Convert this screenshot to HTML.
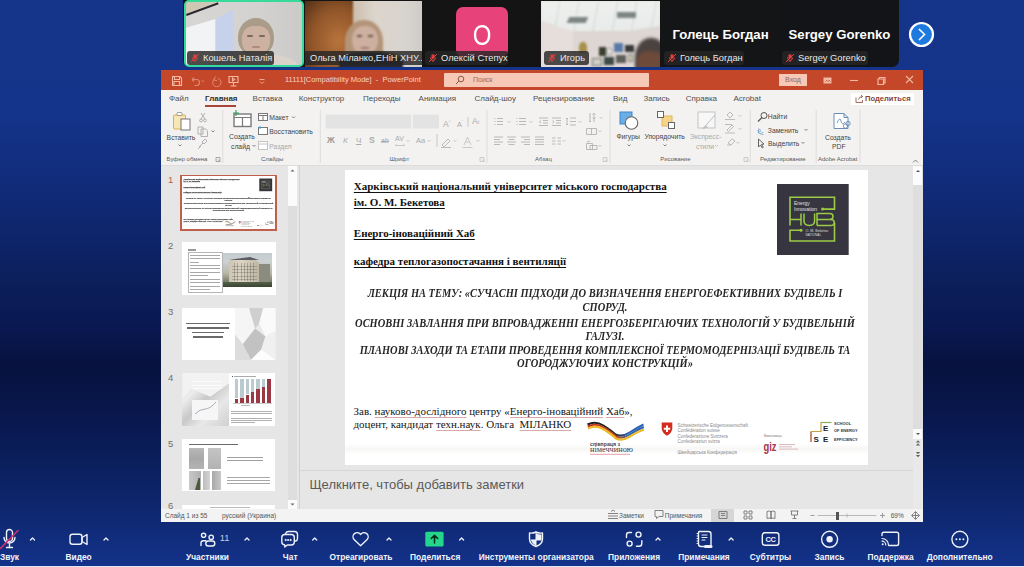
<!DOCTYPE html>
<html><head><meta charset="utf-8">
<style>
*{box-sizing:border-box;margin:0;padding:0}
html,body{width:1024px;height:567px;overflow:hidden}
body{position:relative;font-family:"Liberation Sans",sans-serif;
background:linear-gradient(180deg,#15358a 0%,#14338a 20%,#102a76 35%,#0c1f5c 49%,#091850 58%,#07123f 64%,#08164a 72%,#0c2264 85%,#0f2974 92%,#13328a 100%);}
.a{position:absolute}
.nw{white-space:nowrap}
/* video strip */
#strip{left:183px;top:0;width:716px;height:67px;background:#141414;border-radius:0 0 7px 7px}
.tile{position:absolute;top:1px;height:66px}
.tag{position:absolute;height:14px;top:51px;background:rgba(38,38,38,.82);border-radius:3px;color:#e8e8e8;font-size:9px;line-height:14px;padding-left:16px;padding-right:4px;white-space:nowrap}
.tag:before{content:"";position:absolute;left:4px;top:3px;width:8px;height:8px;}
/* ppt */
#ppt{left:161px;top:70px;width:762px;height:452px;background:#f3f2f1;overflow:hidden}
#title{left:0;top:0;width:762px;height:20px;background:#c5472a}
#tabs{left:0;top:20px;width:762px;height:17px;font-size:8px;color:#505050}
#ribbon{left:0;top:37px;width:762px;height:58px}
#body{left:0;top:95px;width:762px;height:344px;background:#e6e6e6}
#status{left:0;top:439px;width:762px;height:13px;background:#f3f3f3;font-size:7px;color:#555}
/* toolbar */
.tb{position:absolute;top:551px;color:#fff;font-size:9px;font-weight:bold;white-space:nowrap;line-height:11px}
</style></head><body>

<div id="strip" class="a">
 <!-- tile1 -->
 <div class="tile" style="left:1px;top:0;width:120px;height:67px;border:2px solid #35db98;border-radius:5px;overflow:hidden;background:#d3d1cf">
  <div class="a" style="left:0;top:0;width:118px;height:63px;filter:blur(.7px)">
  <div class="a" style="left:0;top:0;width:118px;height:63px;background:linear-gradient(90deg,#d8d6d4 0%,#d4d2d0 60%,#cccac8 100%)"></div>
  <div class="a" style="left:0;top:0;width:30px;height:12px;background:#cfc8b4;clip-path:polygon(0 0,100% 0,0 100%)"></div>
  <div class="a" style="left:0;top:0;width:118px;height:63px;background:#f2f3f4;clip-path:polygon(0 41%,25% 27%,25% 100%,0 100%)"></div>
  <div class="a" style="left:0;top:0;width:118px;height:63px;background:#c6d2ec;clip-path:polygon(25% 27%,40% 12%,40% 100%,25% 100%)"></div>
  <div class="a" style="left:0;top:12px;width:34px;height:1.6px;background:#2a2a2a;transform:rotate(-20deg);transform-origin:0 0"></div>
  <div class="a" style="left:52px;top:16px;width:36px;height:38px;border-radius:50% 50% 45% 45%;background:#a99c88"></div>
  <div class="a" style="left:56px;top:24px;width:28px;height:30px;border-radius:40% 40% 50% 50%;background:#cdb2a2"></div>
  <div class="a" style="left:61px;top:33px;width:6px;height:2px;background:#7a6a60;border-radius:1px"></div>
  <div class="a" style="left:73px;top:33px;width:6px;height:2px;background:#7a6a60;border-radius:1px"></div>
  <div class="a" style="left:66px;top:44px;width:8px;height:2px;background:#b08a80;border-radius:1px"></div>
  <div class="a" style="left:46px;top:53px;width:66px;height:24px;border-radius:45%;background:#dcd2cc"></div>
  </div>
  <div class="tag" style="left:1px;top:49px;width:87px;font-size:9.3px"><svg class="a" style="left:3px;top:2px" width="10" height="10" viewBox="0 0 10 10"><path d="M3.5 1.5h3v4h-3z" fill="#e04040"/><path d="M2.5 4.5q0 3 2.5 3t2.5-3M5 7.5v1.5M1 9l8-8" stroke="#e04040" stroke-width="1" fill="none"/></svg>Кошель Наталія</div>
 </div>
 <!-- tile2 -->
 <div class="tile" style="left:122px;top:1px;width:117px;height:66px;overflow:hidden;background:#d6d0c6">
  <div class="a" style="left:0;top:0;width:117px;height:66px;filter:blur(1px)">
  <div class="a" style="left:-2px;top:-2px;width:50px;height:70px;background:radial-gradient(ellipse at 70% 60%,#b8743c,#8f5428 55%,#4a2a14 100%)"></div>
  <div class="a" style="left:48px;top:-2px;width:72px;height:70px;background:linear-gradient(90deg,#cdbfae,#dcd5cb 30%,#d8d4ce 70%,#cfccc7)"></div>
  <div class="a" style="left:40px;top:19px;width:38px;height:44px;border-radius:48% 48% 30% 30%;background:#b39478"></div>
  <div class="a" style="left:47px;top:25px;width:26px;height:29px;border-radius:45% 45% 50% 50%;background:#cdb0a0"></div>
  <div class="a" style="left:52px;top:34px;width:5px;height:1.6px;background:#6a5448"></div>
  <div class="a" style="left:63px;top:34px;width:5px;height:1.6px;background:#6a5448"></div>
  <div class="a" style="left:56px;top:46px;width:8px;height:1.6px;background:#a07870"></div>
  <div class="a" style="left:34px;top:51px;width:64px;height:24px;border-radius:40% 40% 0 0;background:#26262c"></div>
  </div>
  <div class="tag" style="left:0;top:50px;width:117px;padding-left:5px;font-size:9.3px;border-radius:0">Ольга Міланко,ЕНіН ХНУ...</div>
 </div>
 <!-- tile3 -->
 <div class="tile" style="left:240px;top:1px;width:117px;height:66px;background:#141414">
  <div class="a" style="left:33px;top:6px;width:52px;height:50px;background:#e8427a;border-radius:7px;overflow:hidden"><div class="a" style="left:0;top:0;width:52px;color:#fff;font-size:30px;text-align:center;line-height:55px;transform:scaleX(.8)">О</div></div>
  <div class="tag" style="left:2px;top:50px;width:83px;font-size:9.3px"><svg class="a" style="left:3px;top:2px" width="10" height="10" viewBox="0 0 10 10"><path d="M3.5 1.5h3v4h-3z" fill="#e04040"/><path d="M2.5 4.5q0 3 2.5 3t2.5-3M5 7.5v1.5M1 9l8-8" stroke="#e04040" stroke-width="1" fill="none"/></svg>Олексій Степух</div>
 </div>
 <!-- tile4 -->
 <div class="tile" style="left:358px;top:1px;width:119px;height:66px;overflow:hidden;background:#dcd8d4">
  <div class="a" style="left:0;top:0;width:119px;height:66px;filter:blur(.8px)">
  <div class="a" style="left:0;top:0;width:119px;height:66px;background:#ddd6d2"></div>
  <div class="a" style="left:0;top:0;width:119px;height:66px;background:linear-gradient(180deg,#eef0ee,#e2e6e4);clip-path:polygon(0 0,100% 0,100% 38%,75% 45%,25% 46%,0 30%)"></div>
  <div class="a" style="left:0;top:0;width:119px;height:66px;background:repeating-linear-gradient(100deg,transparent 0 18px,rgba(160,170,168,.35) 18px 19px);clip-path:polygon(0 0,100% 0,100% 38%,75% 45%,25% 46%,0 30%)"></div>
  <div class="a" style="left:0;top:0;width:32px;height:66px;background:#e6dedb;clip-path:polygon(0 30%,100% 46%,100% 100%,0 100%)"></div>
  <div class="a" style="left:27px;top:16px;width:19px;height:6px;background:#7e8684;transform:skewX(-25deg)"></div>
  <div class="a" style="left:76px;top:11px;width:19px;height:6px;background:#7e8684"></div>
  <div class="a" style="left:38px;top:41px;width:8px;height:11px;background:#a8904a;border-radius:45% 45% 20% 20%"></div>
  <div class="a" style="left:58px;top:46px;width:7px;height:9px;background:#3a4030"></div>
  <div class="a" style="left:66px;top:47px;width:5px;height:7px;background:#f0f0f0;border:1px solid #999"></div>
  <div class="a" style="left:73px;top:42px;width:9px;height:9px;background:#5a7aa8"></div>
  <div class="a" style="left:84px;top:44px;width:9px;height:7px;background:#3a3a3c"></div>
  <div class="a" style="left:51px;top:57px;width:10px;height:8px;background:#cfcfc8;border:1px solid #777"></div>
  <div class="a" style="left:63px;top:56px;width:10px;height:8px;background:#3e4a48"></div>
  <div class="a" style="left:75px;top:54px;width:10px;height:8px;background:#5e5e5a"></div>
  <div class="a" style="left:87px;top:53px;width:5px;height:8px;background:#c8c8a8;border:1px solid #888"></div>
  <div class="a" style="left:94px;top:37px;width:32px;height:40px;border-radius:48% 48% 30% 30%;background:#4a4240;filter:blur(1px)"></div>
  <div class="a" style="left:96px;top:50px;width:26px;height:24px;border-radius:40%;background:#6e4a3a;filter:blur(1.5px)"></div>
  </div>
  <div class="tag" style="left:3px;top:50px;width:45px;font-size:9.3px"><svg class="a" style="left:3px;top:2px" width="10" height="10" viewBox="0 0 10 10"><path d="M3.5 1.5h3v4h-3z" fill="#e04040"/><path d="M2.5 4.5q0 3 2.5 3t2.5-3M5 7.5v1.5M1 9l8-8" stroke="#e04040" stroke-width="1" fill="none"/></svg>Игорь</div>
 </div>
 <!-- tile5 -->
 <div class="tile" style="left:478px;top:1px;width:118px;height:66px;background:#141516">
  <div class="a nw" style="left:11.5px;top:27px;font-size:13.2px;font-weight:bold;color:#fff;line-height:14px">Голець Богдан</div>
  <div class="tag" style="left:3px;top:50px;width:80px;font-size:9.3px"><svg class="a" style="left:3px;top:2px" width="10" height="10" viewBox="0 0 10 10"><path d="M3.5 1.5h3v4h-3z" fill="#e04040"/><path d="M2.5 4.5q0 3 2.5 3t2.5-3M5 7.5v1.5M1 9l8-8" stroke="#e04040" stroke-width="1" fill="none"/></svg>Голець Богдан</div>
 </div>
 <!-- tile6 -->
 <div class="tile" style="left:597px;top:1px;width:118px;height:66px;background:#121417;border-radius:0 0 7px 0">
  <div class="a nw" style="left:8.5px;top:27px;font-size:13.2px;font-weight:bold;color:#fff;line-height:14px">Sergey Gorenko</div>
  <div class="tag" style="left:2px;top:50px;width:86px;font-size:9.3px"><svg class="a" style="left:3px;top:2px" width="10" height="10" viewBox="0 0 10 10"><path d="M3.5 1.5h3v4h-3z" fill="#e04040"/><path d="M2.5 4.5q0 3 2.5 3t2.5-3M5 7.5v1.5M1 9l8-8" stroke="#e04040" stroke-width="1" fill="none"/></svg>Sergey Gorenko</div>
 </div>
</div>
<svg class="a" style="left:908px;top:21px" width="27" height="27" viewBox="0 0 27 27"><circle cx="13.5" cy="13.5" r="11.5" fill="#1f7ae0" stroke="#fff" stroke-width="2.2"/><path d="M11 8l5.5 5.5L11 19" stroke="#fff" stroke-width="1.6" fill="none"/></svg>

<div id="ppt" class="a">
  <div id="title" class="a">
    <svg class="a" style="left:10px;top:5px" width="95" height="12" viewBox="0 0 95 12" fill="none" stroke="#f3b7a2" stroke-width="1.1">
      <path d="M1.5 1.5h7.5l1.5 1.5v7.5h-9z M3.5 1.5v3h5v-3 M3 10.5v-4h5.5v4"/>
      <g opacity=".6"><path d="M21 4.5h4.5a3 3 0 0 1 0 6h-2 M21 4.5l2-2.2 M21 4.5l2 2" />
      <path d="M30.5 5.5l1.3 1.2 1.3-1.2" stroke-width=".9"/>
      <path d="M47 3.5a4.2 4.2 0 1 1 -4.5 1.5 M44.5 1.5l-2 3.5 3.5 .5" stroke-width="1"/></g>
      <path d="M58 1.5h9v6h-9z M62.5 7.5v3.5 M59.5 11h6 M61.5 3v3l2.2-1.5z" />
      <path d="M88.5 4.5h5 M89 6.5l2 2 2-2" stroke-width=".9"/>
    </svg>
    <div class="a nw" style="left:124px;top:4px;font-size:7.5px;line-height:11px;color:#f6d2c4">11111[Compatibility Mode]&nbsp; - &nbsp;PowerPoint</div>
    <div class="a" style="left:283px;top:3px;width:205px;height:13.5px;background:#f8c8b6;border-radius:1px">
      <svg class="a" style="left:11px;top:2px" width="10" height="10" viewBox="0 0 10 10" fill="none" stroke="#8a5a4a" stroke-width="1"><circle cx="6" cy="4" r="2.8"/><path d="M4 6l-3 3"/></svg>
      <div class="a nw" style="left:29px;top:2px;font-size:7px;line-height:10px;color:#8d6d62">Поиск</div>
    </div>
    <div class="a" style="left:618px;top:4px;width:28px;height:11.5px;background:#f8c8b6;font-size:7px;line-height:11.5px;color:#8a6a5f;text-align:center">Вход</div>
    <svg class="a" style="left:658px;top:4px" width="95" height="12" viewBox="0 0 95 12" fill="none" stroke="#f3b7a2" stroke-width="1.1">
      <path d="M4.5 3.5h8v6h-8z" fill="#f3b7a2" stroke="none"/><path d="M6.5 7.5l1.2-1.2 1.2 1.2 M9 7.5l1.2-1.2 1.2 1.2" stroke="#c4482a" stroke-width=".8"/>
      <path d="M31 6.5h8"/>
      <path d="M59 5h5.5v5.5h-5.5z M60.5 5v-1.5h5.5v5.5h-1.5" stroke-width="1.2"/>
      <path d="M87 2l7 7 M94 2l-7 7"/>
    </svg>
  </div>
  <div id="tabs" class="a">
    <div class="a nw" style="left:8px;top:4.2px;line-height:10px">Файл</div>
    <div class="a nw" style="left:44px;top:4.2px;line-height:10px;font-weight:bold;color:#333">Главная</div>
    <div class="a" style="left:44px;top:14.5px;width:31px;height:2px;background:#a8443a"></div>
    <div class="a nw" style="left:91.6px;top:4.2px;line-height:10px">Вставка</div>
    <div class="a nw" style="left:137.7px;top:4.2px;line-height:10px">Конструктор</div>
    <div class="a nw" style="left:202px;top:4.2px;line-height:10px">Переходы</div>
    <div class="a nw" style="left:257.6px;top:4.2px;line-height:10px">Анимация</div>
    <div class="a nw" style="left:313.5px;top:4.2px;line-height:10px">Слайд-шоу</div>
    <div class="a nw" style="left:372px;top:4.2px;line-height:10px">Рецензирование</div>
    <div class="a nw" style="left:452px;top:4.2px;line-height:10px">Вид</div>
    <div class="a nw" style="left:482.5px;top:4.2px;line-height:10px">Запись</div>
    <div class="a nw" style="left:524.7px;top:4.2px;line-height:10px">Справка</div>
    <div class="a nw" style="left:572.4px;top:4.2px;line-height:10px">Acrobat</div>
    <div class="a nw" style="left:690px;top:2.6px;width:63px;height:12px;background:#fff;line-height:12px;font-weight:bold;color:#8e4434;padding-left:14px;font-size:7.6px">Поделиться
      <svg class="a" style="left:4px;top:1.5px" width="9" height="9" viewBox="0 0 9 9" fill="none" stroke="#9a5a4a" stroke-width=".9"><path d="M1 3.5v5h6.5v-2.5 M3.5 5.5q.5-3 4-3 M6 1l1.6 1.5L6 4"/></svg>
    </div>
  </div>
  <div id="ribbon" class="a">
<div class="a nw" style="left:5.6px;top:25.5px;font-size:6.8px;line-height:9px;color:#444;font-weight:normal;">Вставить</div>
<div class="a nw" style="left:5.6px;top:48.3px;font-size:6px;line-height:9px;color:#5a5a5a;font-weight:normal;">Буфер обмена</div>
<div class="a nw" style="left:68px;top:25.1px;font-size:6.8px;line-height:9px;color:#444;font-weight:normal;">Создать</div>
<div class="a nw" style="left:70px;top:34.5px;font-size:6.8px;line-height:9px;color:#444;font-weight:normal;">слайд</div>
<div class="a nw" style="left:108.3px;top:6.0px;font-size:6.8px;line-height:9px;color:#444;font-weight:normal;">Макет</div>
<div class="a nw" style="left:108.3px;top:20.1px;font-size:6.8px;line-height:9px;color:#444;font-weight:normal;">Восстановить</div>
<div class="a nw" style="left:108.3px;top:34.5px;font-size:6.8px;line-height:9px;color:#aaaaaa;font-weight:normal;">Раздел</div>
<div class="a nw" style="left:100px;top:48.3px;font-size:6px;line-height:9px;color:#5a5a5a;font-weight:normal;">Слайды</div>
<div class="a nw" style="left:228.4px;top:48.3px;font-size:6px;line-height:9px;color:#5a5a5a;font-weight:normal;">Шрифт</div>
<div class="a nw" style="left:374px;top:48.3px;font-size:6px;line-height:9px;color:#5a5a5a;font-weight:normal;">Абзац</div>
<div class="a nw" style="left:455.4px;top:25.3px;font-size:6.8px;line-height:9px;color:#444;font-weight:normal;">Фигуры</div>
<div class="a nw" style="left:483.4px;top:25.3px;font-size:6.8px;line-height:9px;color:#444;font-weight:normal;">Упорядочить</div>
<div class="a nw" style="left:528.8px;top:25.3px;font-size:6.8px;line-height:9px;color:#aaaaaa;font-weight:normal;">Экспресс-</div>
<div class="a nw" style="left:535px;top:34.5px;font-size:6.8px;line-height:9px;color:#aaaaaa;font-weight:normal;">стили</div>
<div class="a nw" style="left:499.3px;top:48.3px;font-size:6px;line-height:9px;color:#5a5a5a;font-weight:normal;">Рисование</div>
<div class="a nw" style="left:606.8px;top:4.9px;font-size:6.8px;line-height:9px;color:#444;font-weight:normal;">Найти</div>
<div class="a nw" style="left:606.8px;top:18.5px;font-size:6.8px;line-height:9px;color:#444;font-weight:normal;">Заменить</div>
<div class="a nw" style="left:607px;top:31.5px;font-size:6.8px;line-height:9px;color:#444;font-weight:normal;">Выделить</div>
<div class="a nw" style="left:599px;top:48.3px;font-size:6px;line-height:9px;color:#5a5a5a;font-weight:normal;">Редактирование</div>
<div class="a nw" style="left:664px;top:25.5px;font-size:6.8px;line-height:9px;color:#444;font-weight:normal;">Создать</div>
<div class="a nw" style="left:671px;top:34.5px;font-size:6.8px;line-height:9px;color:#444;font-weight:normal;">PDF</div>
<div class="a nw" style="left:657px;top:48.3px;font-size:6px;line-height:9px;color:#5a5a5a;font-weight:normal;">Adobe Acrobat</div>
<svg class="a" style="left:0;top:0" width="762" height="58" viewBox="0 0 762 58" fill="none" stroke-width="1">
<g stroke="#dcdcdc"><path d="M61.8 3v53 M159.3 3v53 M326 3v53 M449 3v53 M589.3 3v53 M655.2 3v53 M699 3v53"/></g>
<!-- chevrons -->
<g stroke="#666" stroke-width=".8"><path d="M17.5 37.5l1.5 1.5 1.5-1.5 M50.5 23.5l1.5 1.5 1.5-1.5 M91.5 38l1.5 1.5 1.5-1.5 M131 9.5l1.5 1.5 1.5-1.5 M466.5 37.5l1.5 1.5 1.5-1.5 M502.5 37.5l1.5 1.5 1.5-1.5 M643.5 22l1.5 1.5 1.5-1.5 M640.5 35l1.5 1.5 1.5-1.5 M752 55.5l2.5-2.5 2.5 2.5"/></g>
<g stroke="#bbb" stroke-width=".8"><path d="M127 38l1.5 1.5 1.5-1.5 M554 38l1.5 1.5 1.5-1.5 M245.5 13.5l1.5 1.5 1.5-1.5 M273.5 13.5l1.5 1.5 1.5-1.5 M245.5 33l1.5 1.5 1.5-1.5 M266.5 33l1.5 1.5 1.5-1.5 M292.5 33l1.5 1.5 1.5-1.5 M315.5 33l1.5 1.5 1.5-1.5 M346.5 14l1.5 1.5 1.5-1.5 M368.5 14l1.5 1.5 1.5-1.5 M417.5 14l1.5 1.5 1.5-1.5 M401.5 33l1.5 1.5 1.5-1.5 M438.5 10l1.5 1.5 1.5-1.5 M437.5 23.5l1.5 1.5 1.5-1.5 M437.5 38l1.5 1.5 1.5-1.5 M577.5 8l1.5 1.5 1.5-1.5 M577.5 21l1.5 1.5 1.5-1.5 M575.5 35l1.5 1.5 1.5-1.5"/></g>
<!-- launchers -->
<g stroke="#888" stroke-width=".7"><path d="M55 50.5h4v4h-4z M57 52.5l2 2"/></g>
<g stroke="#bbb" stroke-width=".7"><path d="M319 50.5h4v4h-4z M321 52.5l2 2 M442 50.5h4v4h-4z M444 52.5l2 2 M583 50.5h4v4h-4z M585 52.5l2 2"/></g>
<!-- paste -->
<rect x="12.5" y="8" width="12" height="14" rx="1" fill="#f6e7b3" stroke="#d9b24a"/>
<rect x="16" y="5.5" width="5" height="3" rx="1" fill="#fff" stroke="#888" stroke-width=".8"/>
<rect x="20" y="12" width="9" height="11" fill="#fff" stroke="#777"/>
<!-- scissors copy painter -->
<g stroke="#aaa" stroke-width=".9"><path d="M40 6l4 6 M44 6l-4 6"/><circle cx="40" cy="13.5" r="1.4"/><circle cx="44" cy="13.5" r="1.4"/>
<path d="M37 20h5v7h-5z M40 22h5l1.5 1.5v6h-6.5z"/>
<path d="M38 40l4-4 M41 35l3-3 2 2-3 3z M37 42l3-3"/></g>
<!-- new slide -->
<rect x="73" y="7" width="17" height="12.5" fill="#fff" stroke="#7a7a7a" stroke-width="1.4"/>
<path d="M73 10.5h17 M81.5 10.5v9" stroke="#7a7a7a" stroke-width="1.2"/>
<path d="M75 3v6 M72 6h6" stroke="#2e9e5e" stroke-width="1.1"/>
<!-- maket / restore / section -->
<rect x="97.5" y="6.5" width="9" height="7" fill="#fff" stroke="#777"/><path d="M97.5 8.5h9 M102 8.5v5" stroke="#777"/>
<rect x="97.5" y="20.5" width="9" height="7" fill="#fff" stroke="#777"/><path d="M99 19v3 M97.5 20.5h3" stroke="#3a9fd8"/>
<rect x="97.5" y="34.5" width="9" height="8" fill="#fff" stroke="#c4c4c4"/><path d="M97.5 37h9" stroke="#c4c4c4"/>
<!-- font boxes -->
<rect x="164.6" y="7.7" width="85.7" height="13.8" fill="#e3e3e3"/>
<rect x="252" y="7.7" width="26" height="13.8" fill="#e3e3e3"/>
</svg>
<div class="a nw" style="left:282px;top:10.0px;font-size:8.5px;line-height:9px;color:#aaaaaa;font-weight:normal;">A<sup style="font-size:4px">^</sup></div>
<div class="a nw" style="left:296px;top:10.0px;font-size:7.5px;line-height:9px;color:#aaaaaa;font-weight:normal;">A<sup style="font-size:4px">ˇ</sup></div>
<div class="a nw" style="left:311px;top:10.0px;font-size:8.5px;line-height:9px;color:#aaaaaa;font-weight:normal;">A<span style="font-size:5px">ℓ</span></div>
<div class="a nw" style="left:166px;top:29.1px;font-size:8.5px;line-height:9px;color:#999;font-weight:bold;">Ж</div>
<div class="a nw" style="left:182px;top:29.1px;font-size:8px;line-height:9px;color:#aaaaaa;font-weight:normal;font-style:italic">К</div>
<div class="a nw" style="left:195px;top:29.1px;font-size:8px;line-height:9px;color:#aaaaaa;font-weight:normal;"><u>Ч</u></div>
<div class="a nw" style="left:208px;top:29.1px;font-size:8.5px;line-height:9px;color:#aaaaaa;font-weight:bold;">S</div>
<div class="a nw" style="left:220px;top:29.1px;font-size:7px;line-height:9px;color:#aaaaaa;font-weight:normal;"><s>ab</s></div>
<div class="a nw" style="left:234px;top:27.0px;font-size:7px;line-height:9px;color:#aaaaaa;font-weight:normal;">AV</div>
<div class="a nw" style="left:255px;top:29.1px;font-size:7.5px;line-height:9px;color:#aaaaaa;font-weight:normal;">Aa</div>
<svg class="a" style="left:0;top:0" width="762" height="58" viewBox="0 0 762 58" fill="none" stroke-width="1">
<g stroke="#c8c8c8"><path d="M307 10v10 M276 27v13 M234 38.5h10 M234 38.5l1.5-1 M244 38.5l-1.5-1"/>
<path d="M281 38l6-6 2 2-6 6z M280 40.5h10" stroke="#bbb"/>
<path d="M303 38l3.5-8 3.5 8 M304.5 35h4 M301.5 40.5h10"/>
</g>
<!-- paragraph icons -->
<g stroke="#b2b2b2" stroke-width=".9">
<path d="M336 11.5h6 M336 14.5h6 M336 17.5h6 M333.5 11.5h1 M333.5 14.5h1 M333.5 17.5h1"/>
<path d="M358 11.5h7 M358 14.5h7 M358 17.5h7 M355.5 11.5h1 M355.5 14.5h1 M355.5 17.5h1"/>
<path d="M378 11h9 M382 13.5h5 M382 16h5 M378 18.5h9 M380 13.5l-1.5 1.3 1.5 1.3"/>
<path d="M391 11h9 M395 13.5h5 M395 16h5 M391 18.5h9 M391.5 13.5l1.5 1.3-1.5 1.3"/>
<path d="M409 11h6 M409 14.5h6 M409 18h6 M406 11v7 M405 12l1-1 1 1 M405 17l1 1 1-1"/>
<path d="M333 30h9 M333 32.5h6 M333 35h9 M333 37.5h6"/>
<path d="M346 30h9 M347.5 32.5h6 M346 35h9 M347.5 37.5h6"/>
<path d="M360 30h9 M363 32.5h6 M360 35h9 M363 37.5h6"/>
<path d="M374 30h9 M374 32.5h9 M374 35h9 M374 37.5h9"/>
<path d="M391 31h3.5 M396.5 31h3.5 M391 34h3.5 M396.5 34h3.5 M391 37h3.5 M396.5 37h3.5"/>
<path d="M429 6v9 M428 14l1 1 1-1 M433 15v-7 M431.5 11h3 M431.5 8l1.5-2 1.5 2"/>
<path d="M425.5 21.5h10v6h-10z M430.5 21v7"/>
<path d="M425.5 36.5h6v6h-6z M429 38.5h7v4h-7z M426 35l3-1"/>
</g>
<!-- shapes -->
<rect x="459" y="5" width="12" height="12" fill="#6aaee6" stroke="#3f86c9"/>
<circle cx="470.5" cy="16" r="6.3" fill="#fff" stroke="#666" stroke-width="1.1"/>
<!-- arrange -->
<rect x="501" y="9" width="10" height="10" fill="#f4d48a" stroke="#e2b65a"/>
<rect x="496.5" y="4.5" width="6" height="6" fill="#fff" stroke="#666"/>
<rect x="507.5" y="15.5" width="6" height="6" fill="#fff" stroke="#666"/>
<!-- quick styles disabled -->
<rect x="537" y="5" width="17" height="16" fill="#f7f7f7" stroke="#c8c8c8" stroke-width="1.1"/>
<path d="M543 21l3-4 8-9 M542 21.5l2.5-3 2 1.5z" stroke="#c0c0c0"/>
<!-- fill outline effects -->
<g stroke="#bbb"><path d="M566 8l3-3 3 3-3 3z M564 12.5h10 M564 26h10 M566 23l5-5 1.5 1.5-5 5z M564 17.5h7" stroke-width="1"/>
<path d="M567 36l4-4 3 2-4 4z M566 38l4 0" /></g>
<!-- find replace select -->
<circle cx="603" cy="8.5" r="3" stroke="#555" stroke-width="1"/><path d="M601 10.5l-4 4" stroke="#555" stroke-width="1.2"/>
<text x="597" y="25" font-size="5" fill="#4a90c8" font-family="Liberation Sans">b</text><text x="600" y="28" font-size="5" fill="#4a90c8" font-family="Liberation Sans">c</text><path d="M597 23q0 4 3 4" stroke="#4a90c8" stroke-width=".8"/>
<path d="M597.5 32v8l2-2 1.8 3 1-0.6-1.8-3 2.5-.3z" stroke="#555" stroke-width=".9"/>
<!-- pdf -->
<path d="M673 6.5h10l4 4v11h-14z M683 6.5v4h4" stroke="#6a8db8" fill="#fff" stroke-width="1"/>
<path d="M676 16q3-7 4-2t4 1" stroke="#6a8db8" stroke-width=".9"/>
<circle cx="684.5" cy="19" r="2.2" stroke="#6a8db8" stroke-width=".9"/><circle cx="687" cy="16.5" r="2.2" stroke="#6a8db8" stroke-width=".9"/>
</svg>
</div>
  <div id="body" class="a">
<div class="a" style="left:0.0px;top:0.0px;width:762.0px;height:344.0px;background:#e6e6e6"></div>
<div class="a" style="left:0.0px;top:0.0px;width:762.0px;height:1.0px;background:#dcdcdc"></div>
<div class="a" style="left:127.0px;top:1.0px;width:9.0px;height:343.0px;background:#dedede"></div>
<div class="a" style="left:127.0px;top:1.2px;width:9.0px;height:8.6px;background:#fbfbfb"></div>
<svg class="a" style="left:127px;top:1px" width="9" height="9"><path d="M2.5 5.5l2-2 2 2z" fill="#666"/></svg>
<div class="a" style="left:127.0px;top:9.8px;width:9.0px;height:30.9px;background:#fbfbfb"></div>
<div class="a" style="left:127.0px;top:334.5px;width:9.0px;height:9.5px;background:#fbfbfb"></div>
<svg class="a" style="left:127px;top:335px" width="9" height="9"><path d="M2.5 3.5l2 2 2-2z" fill="#666"/></svg>
<div class="a" style="left:138.0px;top:0.0px;width:1.0px;height:344.0px;background:#d2d2d2"></div>
<div class="a" style="left:19.2px;top:9.8px;width:96.8px;height:55.9px;background:#c0604c"></div>
<div class="a" style="left:20.8px;top:11.4px;width:93.6px;height:52.7px;background:#fff;overflow:hidden"></div>
<div class="a" style="left:20.8px;top:11.4px;width:523px;height:295px;transform:scale(0.1790);transform-origin:0 0;overflow:hidden;-webkit-text-stroke:.9px #555;filter:saturate(.6)">
<div class="a nw" style="left:8.80px;top:9.99px;font:normal bold 11px/13.2px 'Liberation Serif';color:#111;text-decoration:underline;text-underline-offset:1.5px;text-decoration-thickness:1px;text-decoration-skip-ink:none;">Харківський національний університет міського господарства</div>
<div class="a nw" style="left:8.80px;top:25.89px;font:normal bold 11px/13.2px 'Liberation Serif';color:#111;text-decoration:underline;text-underline-offset:1.5px;text-decoration-thickness:1px;text-decoration-skip-ink:none;">ім. О. М. Бекетова</div>
<div class="a nw" style="left:8.80px;top:56.69px;font:normal bold 11px/13.2px 'Liberation Serif';color:#111;text-decoration:underline;text-underline-offset:1.5px;text-decoration-thickness:1px;text-decoration-skip-ink:none;">Енерго-іноваційний Хаб</div>
<div class="a nw" style="left:8.80px;top:85.19px;font:normal bold 11px/13.2px 'Liberation Serif';color:#111;text-decoration:underline;text-underline-offset:1.5px;text-decoration-thickness:1px;text-decoration-skip-ink:none;">кафедра теплогазопостачання і вентиляції</div>
<div class="a nw" style="left:-40.299999999999955px;width:600px;text-align:center;top:116.26px;font:italic bold 12.2px/14.64px 'Liberation Serif';color:#262626;transform:scaleX(0.857);transform-origin:50% 50%">ЛЕКЦІЯ НА ТЕМУ: «СУЧАСНІ ПІДХОДИ ДО ВИЗНАЧЕННЯ ЕНЕРГОЕФЕКТИВНИХ БУДІВЕЛЬ І</div>
<div class="a nw" style="left:-40.299999999999955px;width:600px;text-align:center;top:129.76px;font:italic bold 12.2px/14.64px 'Liberation Serif';color:#262626;transform:scaleX(0.857);transform-origin:50% 50%">СПОРУД.</div>
<div class="a nw" style="left:-40.299999999999955px;width:600px;text-align:center;top:145.56px;font:italic bold 12.2px/14.64px 'Liberation Serif';color:#262626;transform:scaleX(0.857);transform-origin:50% 50%">ОСНОВНІ ЗАВЛАННЯ ПРИ ВПРОВАДЖЕННІ ЕНЕРГОЗБЕРІГАЮЧИХ ТЕХНОЛОГІЙ У БУДІВЕЛЬНІЙ</div>
<div class="a nw" style="left:-40.299999999999955px;width:600px;text-align:center;top:159.16px;font:italic bold 12.2px/14.64px 'Liberation Serif';color:#262626;transform:scaleX(0.857);transform-origin:50% 50%">ГАЛУЗІ.</div>
<div class="a nw" style="left:-40.299999999999955px;width:600px;text-align:center;top:173.36px;font:italic bold 12.2px/14.64px 'Liberation Serif';color:#262626;transform:scaleX(0.857);transform-origin:50% 50%">ПЛАНОВІ ЗАХОДИ ТА ЕТАПИ ПРОВЕДЕННЯ КОМПЛЕКСНОЇ ТЕРМОМОДЕРНІЗАЦІЇ БУДІВЕЛЬ ТА</div>
<div class="a nw" style="left:-40.299999999999955px;width:600px;text-align:center;top:186.06px;font:italic bold 12.2px/14.64px 'Liberation Serif';color:#262626;transform:scaleX(0.857);transform-origin:50% 50%">ОГОРОДЖУЮЧИХ КОНСТРУКЦІЙ»</div>
<div class="a" style="left:0;top:274px;width:523px;height:10px;background:linear-gradient(180deg,rgba(235,232,228,0),rgba(238,236,233,.4) 40%,rgba(238,236,233,.4) 60%,rgba(235,232,228,0))"></div>
<div class="a nw" style="left:8.50px;top:234.69px;font:normal normal 11px/13.2px 'Liberation Serif';color:#161616;">Зав. <span style="text-decoration:underline #d9a8a8;text-decoration-thickness:.8px;text-underline-offset:2px;text-decoration-skip-ink:none">науково-дослідного</span> центру «<span style="text-decoration:underline #d9a8a8;text-decoration-thickness:.8px;text-underline-offset:2px;text-decoration-skip-ink:none">Енерго-іноваційний</span> <span style="text-decoration:underline #d9a8a8;text-decoration-thickness:.8px;text-underline-offset:2px;text-decoration-skip-ink:none">Хаб</span>»,</div>
<div class="a nw" style="left:8.50px;top:248.19px;font:normal normal 11px/13.2px 'Liberation Serif';color:#161616;">доцент, кандидат <span style="text-decoration:underline #d9a8a8;text-decoration-thickness:.8px;text-underline-offset:2px;text-decoration-skip-ink:none">техн.наук</span>. Ольга&nbsp; <span style="text-decoration:underline #d9a8a8;text-decoration-thickness:.8px;text-underline-offset:2px;text-decoration-skip-ink:none">МІЛАНКО</span></div>
<svg class="a" style="left:432px;top:14px" width="72" height="71" viewBox="777 184 72 71">
<rect x="776.7" y="184" width="72" height="71" fill="#37353f"/>
<g fill="none" stroke="#9ccb45" stroke-width="1.6">
<path d="M790 225.5V197.3h44.5v11.8h-11.5"/>
<path d="M801 230.2h-11v10.8h44.5v-18.5"/>
</g>
<circle cx="822.6" cy="209.1" r="1.5" fill="#9ccb45"/><circle cx="801" cy="230.2" r="1.5" fill="#9ccb45"/>
<text x="794" y="204.6" font-family="Liberation Sans" font-size="5" fill="#e0e0e0">Energy</text>
<text x="794" y="210.6" font-family="Liberation Sans" font-size="5" fill="#e0e0e0">Innovation</text>
<g fill="none" stroke="#9ccb45" stroke-width="1.5">
<path d="M790 219.5h11 M801 213.6v11.9"/>
<path d="M804 213.6v7.5q0 4.4 5.3 4.4q5.3 0 5.3-4.4v-7.5"/>
<path d="M817 225.5v-11.9h13q3 0 3 2.9q0 2.9-3 2.9h-13 M830.5 219.4q3.8 0 3.8 3q0 3.1-3.8 3.1h-13.5"/>
</g>
<text x="805.5" y="231.8" font-family="Liberation Sans" font-size="3.6" fill="#ddd">O. M. Beketov</text>
<text x="805.5" y="236.3" font-family="Liberation Sans" font-size="3.2" fill="#ddd">NATIONAL</text>
</svg>
<svg class="a" style="left:240px;top:250px" width="65" height="40" viewBox="585 420 65 40">
<defs><linearGradient id="gw" x1="0" x2="1" y1="0" y2="0"><stop offset="0" stop-color="#222"/><stop offset=".45" stop-color="#a03020"/><stop offset=".6" stop-color="#c8a030"/><stop offset="1" stop-color="#2a5db0"/></linearGradient>
<linearGradient id="gy" x1="0" x2="1"><stop offset="0" stop-color="#d02828"/><stop offset=".4" stop-color="#e8b030"/><stop offset="1" stop-color="#f2cf1e"/></linearGradient></defs>
<linearGradient id="g1" gradientUnits="userSpaceOnUse" x1="587" x2="645" y1="0" y2="0"><stop offset="0" stop-color="#1e1e1e"/><stop offset=".5" stop-color="#2a2a2a"/><stop offset=".72" stop-color="#2b63b5"/></linearGradient>
<linearGradient id="g2" gradientUnits="userSpaceOnUse" x1="587" x2="645" y1="0" y2="0"><stop offset="0" stop-color="#c62a1e"/><stop offset=".5" stop-color="#c84a20"/><stop offset=".72" stop-color="#2b63b5"/></linearGradient>
<path d="M587.5 424.5q8-4 16 1t12 9q6 3 14-2t14-8" stroke="url(#g1)" stroke-width="2" fill="none"/>
<path d="M587.8 426.5q8-4 16 1t12 9q6 3 14-2t14-7.5" stroke="url(#g2)" stroke-width="2" fill="none"/>
<path d="M588 428.5q8-4 16 1t12 9q6 3 14-2t14-7" stroke="#eeba28" stroke-width="2.2" fill="none"/>
<text x="590" y="445.5" font-family="Liberation Sans" font-size="5.6" font-weight="bold" fill="#4a3e4e" textLength="30" lengthAdjust="spacingAndGlyphs">співпраця з</text>
<text x="590" y="451.5" font-family="Liberation Serif" font-size="7.6" fill="#3e3e50" textLength="43" lengthAdjust="spacingAndGlyphs">німеччиною</text>
<rect x="590" y="453.8" width="40" height="1" fill="#e8a0aa"/>
</svg>
<svg class="a" style="left:315px;top:250px" width="90" height="40" viewBox="660 420 90 40">
<path d="M661.7 422.6h10.6v6.5q-1 4.5-5.3 6.7q-4.3-2.2-5.3-6.7z" fill="#d52b1e"/>
<path d="M666 425.5h2v2.2h2.2v2h-2.2v2.2h-2v-2.2h-2.2v-2h2.2z" fill="#fff"/>
<g font-family="Liberation Sans" font-size="4.5" fill="#8a8a8a">
<text x="677.5" y="426.8">Schweizerische Eidgenossenschaft</text>
<text x="677.5" y="432.2">Confédération suisse</text>
<text x="677.5" y="437.6">Confederazione Svizzera</text>
<text x="677.5" y="443">Confederaziun svizra</text>
<text x="677.5" y="454.2">Швейцарська Конфедерація</text>
</g></svg>
<svg class="a" style="left:415px;top:250px" width="110" height="40" viewBox="760 420 110 40">
<text x="764" y="437" font-family="Liberation Sans" font-size="3.2" fill="#777">Виконавець:</text>
<text x="763.5" y="451" font-family="Liberation Sans" font-size="12" font-weight="bold" fill="#a8344c" textLength="13" lengthAdjust="spacingAndGlyphs">giz</text>
<path d="M779 444.5h16 M779 446.8h13 M779 449.1h19" stroke="#d8b0b8" stroke-width=".9"/>
<path d="M811 442v-10.5h10v-9h10.5" fill="none" stroke-width="1.2" stroke="#c8a040"/>
<path d="M811 442v-10" stroke="#b86a6a" stroke-width="1.2"/>
<path d="M821 422.5h10" stroke="#8ab05a" stroke-width="1.2"/>
<g font-family="Liberation Sans" font-weight="bold" fill="#222"><text x="823" y="431" font-size="8">E</text><text x="813.5" y="441.8" font-size="8">S</text><text x="823" y="441.8" font-size="8">E</text></g>
<g font-family="Liberation Sans" font-weight="bold" font-size="4" fill="#333"><text x="834" y="424.5">SCHOOL</text><text x="834" y="432.3">OF ENERGY</text><text x="834" y="440.5">EFFICIENCY</text></g>
</svg>
</div>
<div class="a" style="left:7px;top:10.0px;font:9.5px/10px 'Liberation Sans';color:#b4604c">1</div>
<div class="a" style="left:7px;top:76.0px;font:9.5px/10px 'Liberation Sans';color:#6f6f6f">2</div>
<div class="a" style="left:21.0px;top:77.0px;width:93.7px;height:52.5px;background:#fff"></div>
<div class="a" style="left:27.0px;top:83.5px;width:8.0px;height:2.0px;background:#999"></div>
<div class="a" style="left:26.5px;top:87.0px;width:35.0px;height:41.0px;border:.6px solid #b5b5b5;background:#fff"></div>
<div class="a" style="left:28.5px;top:90.0px;width:30.7px;height:1.1px;background:#a8a8a8"></div>
<div class="a" style="left:28.5px;top:93.3px;width:30.7px;height:1.1px;background:#a8a8a8"></div>
<div class="a" style="left:28.5px;top:96.6px;width:9.3px;height:1.1px;background:#a8a8a8"></div>
<div class="a" style="left:28.5px;top:100.0px;width:30.7px;height:1.1px;background:#a8a8a8"></div>
<div class="a" style="left:28.5px;top:103.3px;width:30.7px;height:1.1px;background:#a8a8a8"></div>
<div class="a" style="left:28.5px;top:106.6px;width:30.7px;height:1.1px;background:#a8a8a8"></div>
<div class="a" style="left:28.5px;top:110.0px;width:18.6px;height:1.1px;background:#a8a8a8"></div>
<div class="a" style="left:28.5px;top:114.0px;width:30.7px;height:1.1px;background:#a8a8a8"></div>
<div class="a" style="left:28.5px;top:117.3px;width:30.7px;height:1.1px;background:#a8a8a8"></div>
<div class="a" style="left:28.5px;top:120.6px;width:30.7px;height:1.1px;background:#a8a8a8"></div>
<div class="a" style="left:28.5px;top:123.9px;width:20.5px;height:1.1px;background:#a8a8a8"></div>
<div class="a" style="left:61.9px;top:88.0px;width:49.1px;height:34.4px;background:linear-gradient(180deg,#c5ccd0 0%,#ccd1d3 25%,#b9b4a8 60%,#6f7460 88%,#4a5238 100%)"></div>
<div class="a" style="left:68.0px;top:92.0px;width:30.0px;height:26.0px;background:linear-gradient(90deg,#cdc4b2,#ddd5c4 40%,#bfb6a2);clip-path:polygon(0 14%,25% 8%,70% 0,100% 22%,100% 100%,0 100%)"></div>
<div class="a" style="left:68.0px;top:92.0px;width:30.0px;height:3.0px;background:#5a5e62;clip-path:polygon(0 100%,25% 60%,70% 0,100% 100%)"></div>
<div class="a" style="left:71.0px;top:98.0px;width:25.0px;height:18.0px;background:repeating-linear-gradient(90deg,transparent 0 2.2px,rgba(80,80,80,.35) 2.2px 3.2px),repeating-linear-gradient(180deg,transparent 0 2.5px,rgba(80,80,80,.3) 2.5px 3.5px)"></div>
<div class="a" style="left:98.0px;top:99.0px;width:11.0px;height:20.0px;background:#8a8c80"></div>
<div class="a" style="left:61.9px;top:117.0px;width:49.1px;height:5.4px;background:linear-gradient(180deg,#556048,#3a4430)"></div>
<div class="a" style="left:7px;top:142.0px;font:9.5px/10px 'Liberation Sans';color:#6f6f6f">3</div>
<div class="a" style="left:21.0px;top:142.6px;width:93.7px;height:52.4px;background:#fff"></div>
<div class="a" style="left:73.5px;top:142.6px;width:41.2px;height:52.4px;background:#e9e9e9"></div>
<div class="a" style="left:73.5px;top:142.6px;width:41.2px;height:52.4px;background:#f5f5f5;clip-path:polygon(0 0,35% 0,50% 40%,20% 70%,0 50%)"></div>
<div class="a" style="left:73.5px;top:142.6px;width:41.2px;height:52.4px;background:#cfcfcf;clip-path:polygon(35% 0,70% 0,60% 30%,50% 40%)"></div>
<div class="a" style="left:73.5px;top:142.6px;width:41.2px;height:52.4px;background:#fafafa;clip-path:polygon(70% 0,100% 0,100% 45%,75% 55%,60% 30%)"></div>
<div class="a" style="left:73.5px;top:142.6px;width:41.2px;height:52.4px;background:#c2c2c2;clip-path:polygon(50% 40%,75% 55%,65% 80%,40% 100%,20% 70%)"></div>
<div class="a" style="left:73.5px;top:142.6px;width:41.2px;height:52.4px;background:#f0f0f0;clip-path:polygon(75% 55%,100% 45%,100% 100%,65% 80%)"></div>
<div class="a" style="left:73.5px;top:142.6px;width:41.2px;height:52.4px;background:#dcdcdc;clip-path:polygon(0 50%,20% 70%,40% 100%,0 100%)"></div>
<div class="a" style="left:73.5px;top:142.6px;width:41.2px;height:52.4px;background:#fdfdfd;clip-path:polygon(65% 80%,100% 100%,40% 100%)"></div>
<div class="a" style="left:25.0px;top:157.5px;width:44.0px;height:1.8px;background:#6a6a6a"></div>
<div class="a" style="left:26.0px;top:162.0px;width:42.0px;height:1.8px;background:#6a6a6a"></div>
<div class="a" style="left:31.0px;top:166.5px;width:32.0px;height:1.8px;background:#6a6a6a"></div>
<div class="a" style="left:32.0px;top:171.0px;width:30.0px;height:1.8px;background:#6a6a6a"></div>
<div class="a" style="left:7px;top:208.0px;font:9.5px/10px 'Liberation Sans';color:#6f6f6f">4</div>
<div class="a" style="left:21.2px;top:208.0px;width:92.6px;height:52.8px;background:#fff"></div>
<div class="a" style="left:21.2px;top:208.0px;width:46.8px;height:52.8px;background:linear-gradient(135deg,#d4d4d4,#ececec 30%,#c8c8c8 50%,#e8e8e8 70%,#d0d0d0)"></div>
<div class="a" style="left:21.2px;top:208.0px;width:46.8px;height:52.8px;background:#f2f2f2;clip-path:polygon(0 0,100% 0,100% 20%,60% 45%,20% 30%,0 50%)"></div>
<div class="a" style="left:30.9px;top:235.0px;width:26.5px;height:19.5px;background:#f6f6f6"></div>
<svg class="a" style="left:30.9px;top:235.0px" width="27" height="20"><path d="M3 14q5-5 10-5t11-7" stroke="#9a9aa8" stroke-width=".8" fill="none"/></svg>
<div class="a" style="left:31.0px;top:216.0px;width:30.0px;height:1.0px;background:rgba(255,255,255,.7)"></div>
<div class="a" style="left:31.0px;top:219.5px;width:30.0px;height:1.0px;background:rgba(255,255,255,.7)"></div>
<div class="a" style="left:31.0px;top:223.0px;width:30.0px;height:1.0px;background:rgba(255,255,255,.7)"></div>
<div class="a" style="left:68.0px;top:208.0px;width:45.8px;height:52.8px;background:#fff"></div>
<div class="a" style="left:70.5px;top:210.5px;width:1.5px;height:1.5px;background:#555"></div>
<div class="a" style="left:73.0px;top:210.8px;width:22.0px;height:1.0px;background:#aaa"></div>
<div class="a" style="left:73.7px;top:213.7px;width:3.7px;height:19.8px;background:#b9cbd1"></div>
<div class="a" style="left:73.7px;top:233.5px;width:3.7px;height:4.5px;background:#9b3844"></div>
<div class="a" style="left:79.2px;top:213.7px;width:3.7px;height:19.2px;background:#b9cbd1"></div>
<div class="a" style="left:79.2px;top:232.9px;width:3.7px;height:5.1px;background:#9b3844"></div>
<div class="a" style="left:84.5px;top:213.7px;width:3.7px;height:15.8px;background:#b9cbd1"></div>
<div class="a" style="left:84.5px;top:229.5px;width:3.7px;height:8.5px;background:#9b3844"></div>
<div class="a" style="left:89.8px;top:213.7px;width:3.7px;height:13.0px;background:#b9cbd1"></div>
<div class="a" style="left:89.8px;top:226.7px;width:3.7px;height:11.3px;background:#9b3844"></div>
<div class="a" style="left:95.0px;top:213.7px;width:3.7px;height:10.2px;background:#b9cbd1"></div>
<div class="a" style="left:95.0px;top:223.9px;width:3.7px;height:14.1px;background:#9b3844"></div>
<div class="a" style="left:100.5px;top:213.7px;width:3.7px;height:8.5px;background:#b9cbd1"></div>
<div class="a" style="left:100.5px;top:222.2px;width:3.7px;height:15.8px;background:#9b3844"></div>
<div class="a" style="left:105.9px;top:213.7px;width:3.7px;height:0.0px;background:#b9cbd1"></div>
<div class="a" style="left:105.9px;top:213.7px;width:3.7px;height:24.3px;background:#9b3844"></div>
<div class="a" style="left:72.0px;top:238.0px;width:39.0px;height:0.6px;background:#ccc"></div>
<div class="a" style="left:80.0px;top:240.0px;width:9.0px;height:0.8px;background:#bbb"></div>
<div class="a" style="left:70.0px;top:246.0px;width:41.0px;height:0.9px;background:#b0b0b0"></div>
<div class="a" style="left:70.0px;top:248.2px;width:41.0px;height:0.9px;background:#b0b0b0"></div>
<div class="a" style="left:70.0px;top:253.0px;width:41.0px;height:0.9px;background:#b0b0b0"></div>
<div class="a" style="left:70.0px;top:255.2px;width:41.0px;height:0.9px;background:#b0b0b0"></div>
<div class="a" style="left:70.0px;top:257.2px;width:24.0px;height:0.9px;background:#b0b0b0"></div>
<div class="a" style="left:7px;top:274.0px;font:9.5px/10px 'Liberation Sans';color:#6f6f6f">5</div>
<div class="a" style="left:21.0px;top:274.0px;width:93.0px;height:52.0px;background:#fff"></div>
<div class="a" style="left:28.0px;top:278.5px;width:49.0px;height:1.5px;background:#6a6a6a"></div>
<div class="a" style="left:28.0px;top:283.0px;width:15.0px;height:21.0px;background:linear-gradient(180deg,#b8b8b8,#a8a8a8 50%,#b4b4b4)"></div>
<div class="a" style="left:47.0px;top:283.0px;width:13.0px;height:21.0px;background:linear-gradient(180deg,#c4c4c4,#b2b2b2)"></div>
<div class="a" style="left:28.0px;top:306.0px;width:12.0px;height:19.0px;background:linear-gradient(90deg,#c8c8c8,#b0b0b0)"></div>
<div class="a" style="left:42.0px;top:306.0px;width:7.0px;height:19.0px;background:linear-gradient(90deg,#bdbdbd,#d4d4d4)"></div>
<div class="a" style="left:51.0px;top:306.0px;width:9.0px;height:19.0px;background:linear-gradient(90deg,#a8a8a8,#c8c8c8)"></div>
<div class="a" style="left:34.0px;top:313.0px;width:5.0px;height:12.0px;background:#4a5a3a;clip-path:polygon(70% 0,100% 0,100% 100%,0 100%)"></div>
<div class="a" style="left:66.0px;top:292.0px;width:36.0px;height:1.0px;background:#a0a0a0"></div>
<div class="a" style="left:66.0px;top:295.0px;width:36.0px;height:1.0px;background:#a0a0a0"></div>
<div class="a" style="left:66.0px;top:311.5px;width:43.0px;height:1.0px;background:#a8a8a8"></div>
<div class="a" style="left:66.0px;top:314.5px;width:43.0px;height:1.0px;background:#a8a8a8"></div>
<div class="a" style="left:66.0px;top:317.5px;width:43.0px;height:1.0px;background:#a8a8a8"></div>
<div class="a" style="left:7px;top:336.0px;font:9.5px/10px 'Liberation Sans';color:#6f6f6f">6</div>
<div class="a" style="left:21.0px;top:339.7px;width:93.0px;height:4.3px;background:#fff"></div>
<div class="a" style="left:49.0px;top:341.5px;width:40.0px;height:1.0px;background:#bbb"></div>
<div class="a" style="left:184.0px;top:5.0px;width:523.0px;height:294.6px;background:#fff;overflow:visible"></div>
<div class="a" style="left:184px;top:5px;width:523px;height:295px">
<div class="a nw" style="left:8.80px;top:9.99px;font:normal bold 11px/13.2px 'Liberation Serif';color:#111;text-decoration:underline;text-underline-offset:1.5px;text-decoration-thickness:1px;text-decoration-skip-ink:none;">Харківський національний університет міського господарства</div>
<div class="a nw" style="left:8.80px;top:25.89px;font:normal bold 11px/13.2px 'Liberation Serif';color:#111;text-decoration:underline;text-underline-offset:1.5px;text-decoration-thickness:1px;text-decoration-skip-ink:none;">ім. О. М. Бекетова</div>
<div class="a nw" style="left:8.80px;top:56.69px;font:normal bold 11px/13.2px 'Liberation Serif';color:#111;text-decoration:underline;text-underline-offset:1.5px;text-decoration-thickness:1px;text-decoration-skip-ink:none;">Енерго-іноваційний Хаб</div>
<div class="a nw" style="left:8.80px;top:85.19px;font:normal bold 11px/13.2px 'Liberation Serif';color:#111;text-decoration:underline;text-underline-offset:1.5px;text-decoration-thickness:1px;text-decoration-skip-ink:none;">кафедра теплогазопостачання і вентиляції</div>
<div class="a nw" style="left:-40.299999999999955px;width:600px;text-align:center;top:116.26px;font:italic bold 12.2px/14.64px 'Liberation Serif';color:#262626;transform:scaleX(0.857);transform-origin:50% 50%">ЛЕКЦІЯ НА ТЕМУ: «СУЧАСНІ ПІДХОДИ ДО ВИЗНАЧЕННЯ ЕНЕРГОЕФЕКТИВНИХ БУДІВЕЛЬ І</div>
<div class="a nw" style="left:-40.299999999999955px;width:600px;text-align:center;top:129.76px;font:italic bold 12.2px/14.64px 'Liberation Serif';color:#262626;transform:scaleX(0.857);transform-origin:50% 50%">СПОРУД.</div>
<div class="a nw" style="left:-40.299999999999955px;width:600px;text-align:center;top:145.56px;font:italic bold 12.2px/14.64px 'Liberation Serif';color:#262626;transform:scaleX(0.857);transform-origin:50% 50%">ОСНОВНІ ЗАВЛАННЯ ПРИ ВПРОВАДЖЕННІ ЕНЕРГОЗБЕРІГАЮЧИХ ТЕХНОЛОГІЙ У БУДІВЕЛЬНІЙ</div>
<div class="a nw" style="left:-40.299999999999955px;width:600px;text-align:center;top:159.16px;font:italic bold 12.2px/14.64px 'Liberation Serif';color:#262626;transform:scaleX(0.857);transform-origin:50% 50%">ГАЛУЗІ.</div>
<div class="a nw" style="left:-40.299999999999955px;width:600px;text-align:center;top:173.36px;font:italic bold 12.2px/14.64px 'Liberation Serif';color:#262626;transform:scaleX(0.857);transform-origin:50% 50%">ПЛАНОВІ ЗАХОДИ ТА ЕТАПИ ПРОВЕДЕННЯ КОМПЛЕКСНОЇ ТЕРМОМОДЕРНІЗАЦІЇ БУДІВЕЛЬ ТА</div>
<div class="a nw" style="left:-40.299999999999955px;width:600px;text-align:center;top:186.06px;font:italic bold 12.2px/14.64px 'Liberation Serif';color:#262626;transform:scaleX(0.857);transform-origin:50% 50%">ОГОРОДЖУЮЧИХ КОНСТРУКЦІЙ»</div>
<div class="a" style="left:0;top:274px;width:523px;height:10px;background:linear-gradient(180deg,rgba(235,232,228,0),rgba(238,236,233,.4) 40%,rgba(238,236,233,.4) 60%,rgba(235,232,228,0))"></div>
<div class="a nw" style="left:8.50px;top:234.69px;font:normal normal 11px/13.2px 'Liberation Serif';color:#161616;">Зав. <span style="text-decoration:underline #d9a8a8;text-decoration-thickness:.8px;text-underline-offset:2px;text-decoration-skip-ink:none">науково-дослідного</span> центру «<span style="text-decoration:underline #d9a8a8;text-decoration-thickness:.8px;text-underline-offset:2px;text-decoration-skip-ink:none">Енерго-іноваційний</span> <span style="text-decoration:underline #d9a8a8;text-decoration-thickness:.8px;text-underline-offset:2px;text-decoration-skip-ink:none">Хаб</span>»,</div>
<div class="a nw" style="left:8.50px;top:248.19px;font:normal normal 11px/13.2px 'Liberation Serif';color:#161616;">доцент, кандидат <span style="text-decoration:underline #d9a8a8;text-decoration-thickness:.8px;text-underline-offset:2px;text-decoration-skip-ink:none">техн.наук</span>. Ольга&nbsp; <span style="text-decoration:underline #d9a8a8;text-decoration-thickness:.8px;text-underline-offset:2px;text-decoration-skip-ink:none">МІЛАНКО</span></div>
<svg class="a" style="left:432px;top:14px" width="72" height="71" viewBox="777 184 72 71">
<rect x="776.7" y="184" width="72" height="71" fill="#37353f"/>
<g fill="none" stroke="#9ccb45" stroke-width="1.6">
<path d="M790 225.5V197.3h44.5v11.8h-11.5"/>
<path d="M801 230.2h-11v10.8h44.5v-18.5"/>
</g>
<circle cx="822.6" cy="209.1" r="1.5" fill="#9ccb45"/><circle cx="801" cy="230.2" r="1.5" fill="#9ccb45"/>
<text x="794" y="204.6" font-family="Liberation Sans" font-size="5" fill="#e0e0e0">Energy</text>
<text x="794" y="210.6" font-family="Liberation Sans" font-size="5" fill="#e0e0e0">Innovation</text>
<g fill="none" stroke="#9ccb45" stroke-width="1.5">
<path d="M790 219.5h11 M801 213.6v11.9"/>
<path d="M804 213.6v7.5q0 4.4 5.3 4.4q5.3 0 5.3-4.4v-7.5"/>
<path d="M817 225.5v-11.9h13q3 0 3 2.9q0 2.9-3 2.9h-13 M830.5 219.4q3.8 0 3.8 3q0 3.1-3.8 3.1h-13.5"/>
</g>
<text x="805.5" y="231.8" font-family="Liberation Sans" font-size="3.6" fill="#ddd">O. M. Beketov</text>
<text x="805.5" y="236.3" font-family="Liberation Sans" font-size="3.2" fill="#ddd">NATIONAL</text>
</svg>
<svg class="a" style="left:240px;top:250px" width="65" height="40" viewBox="585 420 65 40">
<defs><linearGradient id="gw" x1="0" x2="1" y1="0" y2="0"><stop offset="0" stop-color="#222"/><stop offset=".45" stop-color="#a03020"/><stop offset=".6" stop-color="#c8a030"/><stop offset="1" stop-color="#2a5db0"/></linearGradient>
<linearGradient id="gy" x1="0" x2="1"><stop offset="0" stop-color="#d02828"/><stop offset=".4" stop-color="#e8b030"/><stop offset="1" stop-color="#f2cf1e"/></linearGradient></defs>
<linearGradient id="g1" gradientUnits="userSpaceOnUse" x1="587" x2="645" y1="0" y2="0"><stop offset="0" stop-color="#1e1e1e"/><stop offset=".5" stop-color="#2a2a2a"/><stop offset=".72" stop-color="#2b63b5"/></linearGradient>
<linearGradient id="g2" gradientUnits="userSpaceOnUse" x1="587" x2="645" y1="0" y2="0"><stop offset="0" stop-color="#c62a1e"/><stop offset=".5" stop-color="#c84a20"/><stop offset=".72" stop-color="#2b63b5"/></linearGradient>
<path d="M587.5 424.5q8-4 16 1t12 9q6 3 14-2t14-8" stroke="url(#g1)" stroke-width="2" fill="none"/>
<path d="M587.8 426.5q8-4 16 1t12 9q6 3 14-2t14-7.5" stroke="url(#g2)" stroke-width="2" fill="none"/>
<path d="M588 428.5q8-4 16 1t12 9q6 3 14-2t14-7" stroke="#eeba28" stroke-width="2.2" fill="none"/>
<text x="590" y="445.5" font-family="Liberation Sans" font-size="5.6" font-weight="bold" fill="#4a3e4e" textLength="30" lengthAdjust="spacingAndGlyphs">співпраця з</text>
<text x="590" y="451.5" font-family="Liberation Serif" font-size="7.6" fill="#3e3e50" textLength="43" lengthAdjust="spacingAndGlyphs">німеччиною</text>
<rect x="590" y="453.8" width="40" height="1" fill="#e8a0aa"/>
</svg>
<svg class="a" style="left:315px;top:250px" width="90" height="40" viewBox="660 420 90 40">
<path d="M661.7 422.6h10.6v6.5q-1 4.5-5.3 6.7q-4.3-2.2-5.3-6.7z" fill="#d52b1e"/>
<path d="M666 425.5h2v2.2h2.2v2h-2.2v2.2h-2v-2.2h-2.2v-2h2.2z" fill="#fff"/>
<g font-family="Liberation Sans" font-size="4.5" fill="#8a8a8a">
<text x="677.5" y="426.8">Schweizerische Eidgenossenschaft</text>
<text x="677.5" y="432.2">Confédération suisse</text>
<text x="677.5" y="437.6">Confederazione Svizzera</text>
<text x="677.5" y="443">Confederaziun svizra</text>
<text x="677.5" y="454.2">Швейцарська Конфедерація</text>
</g></svg>
<svg class="a" style="left:415px;top:250px" width="110" height="40" viewBox="760 420 110 40">
<text x="764" y="437" font-family="Liberation Sans" font-size="3.2" fill="#777">Виконавець:</text>
<text x="763.5" y="451" font-family="Liberation Sans" font-size="12" font-weight="bold" fill="#a8344c" textLength="13" lengthAdjust="spacingAndGlyphs">giz</text>
<path d="M779 444.5h16 M779 446.8h13 M779 449.1h19" stroke="#d8b0b8" stroke-width=".9"/>
<path d="M811 442v-10.5h10v-9h10.5" fill="none" stroke-width="1.2" stroke="#c8a040"/>
<path d="M811 442v-10" stroke="#b86a6a" stroke-width="1.2"/>
<path d="M821 422.5h10" stroke="#8ab05a" stroke-width="1.2"/>
<g font-family="Liberation Sans" font-weight="bold" fill="#222"><text x="823" y="431" font-size="8">E</text><text x="813.5" y="441.8" font-size="8">S</text><text x="823" y="441.8" font-size="8">E</text></g>
<g font-family="Liberation Sans" font-weight="bold" font-size="4" fill="#333"><text x="834" y="424.5">SCHOOL</text><text x="834" y="432.3">OF ENERGY</text><text x="834" y="440.5">EFFICIENCY</text></g>
</svg>
</div>
<div class="a" style="left:751.7px;top:1.0px;width:10.3px;height:272.5px;background:#dedede"></div>
<div class="a" style="left:751.7px;top:273.5px;width:10.3px;height:70.5px;background:#e9e9e9"></div>
<div class="a" style="left:751.7px;top:1.0px;width:9.8px;height:9.6px;background:#fbfbfb"></div>
<svg class="a" style="left:751.7px;top:1px" width="10" height="10"><path d="M3 6l2-2 2 2z" fill="#555"/></svg>
<div class="a" style="left:751.7px;top:10.6px;width:9.8px;height:9.4px;background:#fbfbfb"></div>
<div class="a" style="left:751.7px;top:264.0px;width:9.8px;height:9.5px;background:#fbfbfb"></div>
<svg class="a" style="left:751.7px;top:264px" width="10" height="10"><path d="M3 4l2 2 2-2z" fill="#555"/></svg>
<svg class="a" style="left:751.7px;top:274px" width="10" height="26"><path d="M2.8 3.5l2.2-2.2 2.2 2.2z M2.8 6.5l2.2-2.2 2.2 2.2z M2.8 13l2.2 2.2 2.2-2.2z M2.8 16l2.2 2.2 2.2-2.2z" fill="#666"/></svg>
<div class="a" style="left:139.0px;top:305.0px;width:613.0px;height:1.0px;background:#d6d6d6"></div>
<div class="a nw" style="left:148.4px;top:311.8px;font:13px/16px 'Liberation Sans';color:#5a5a5a">Щелкните, чтобы добавить заметки</div>
</div>
  <div id="status" class="a">
<div class="a nw" style="left:4.0px;top:2.0px;font-size:6.5px;line-height:9px;color:#555">Слайд 1 из 55</div>
<div class="a nw" style="left:61.0px;top:2.0px;font-size:6.5px;line-height:9px;color:#555">русский (Украина)</div>
<div class="a nw" style="left:458.0px;top:2.0px;font-size:6.5px;line-height:9px;color:#555">Заметки</div>
<div class="a nw" style="left:503.8px;top:2.0px;font-size:6.5px;line-height:9px;color:#555">Примечания</div>
<div class="a" style="left:550.3px;top:0;width:23.2px;height:13px;background:#d6d6d6"></div>
<div class="a nw" style="left:729.7px;top:2.0px;font-size:6.5px;line-height:9px;color:#555">69%</div>
<svg class="a" style="left:0;top:0" width="762" height="13" viewBox="161 509 762 13" fill="none" stroke="#666" stroke-width=".8">
<path d="M608 513.5h10 M608 516h10 M608 518.5h10 M611 511.5l2-1.5 2 1.5"/>
<path d="M655 510.5h8v6h-4l-2.5 2v-2h-1.5z"/>
<path d="M719 511.5h8v7h-8z M721 513.5h4 M721 515.5h4"/>
<path d="M744 511h3v3h-3z M749 511h3v3h-3z M744 516h3v3h-3z M749 516h3v3h-3z"/>
<path d="M767 511.5q2-1 4 0v7q-2-1-4 0z M771 511.5q2-1 4 0v7q-2-1-4 0z"/>
<path d="M790.5 511h8 M791.5 511v4h6v-4 M794.5 515v3.5 M792.5 518.5h4"/>
<path d="M810.5 515.5h4 M880 515.5h5 M882.5 513v5" stroke="#888"/>
<path d="M817.6 515.5h58.8 M847 513.5v4" stroke="#aaa"/>
<path d="M912 515.5h7 M915.5 512v7 M913.5 513.5l2-2 2 2 M913.5 517.5l2 2 2-2 M913.5 513.5l-2 2 2 2 M917.5 513.5l2 2-2 2"/>
</svg>
<div class="a" style="left:675px;top:2.5px;width:3px;height:8px;background:#555"></div>
</div>
</div>

<!-- toolbar -->
<div class="a" style="left:0;top:565.5px;width:1024px;height:1.5px;background:#dfe4f0"></div>
<div class="a nw" style="left:-90.5px;width:200px;text-align:center;top:551.5px;font-size:8.4px;font-weight:bold;line-height:10px;color:#f2f4fa">Звук</div>
<div class="a nw" style="left:-21.4px;width:200px;text-align:center;top:551.5px;font-size:8.4px;font-weight:bold;line-height:10px;color:#f2f4fa">Видео</div>
<div class="a nw" style="left:107.5px;width:200px;text-align:center;top:551.5px;font-size:8.4px;font-weight:bold;line-height:10px;color:#f2f4fa">Участники</div>
<div class="a nw" style="left:190.2px;width:200px;text-align:center;top:551.5px;font-size:8.4px;font-weight:bold;line-height:10px;color:#f2f4fa">Чат</div>
<div class="a nw" style="left:261.0px;width:200px;text-align:center;top:551.5px;font-size:8.4px;font-weight:bold;line-height:10px;color:#f2f4fa">Отреагировать</div>
<div class="a nw" style="left:335.2px;width:200px;text-align:center;top:551.5px;font-size:8.4px;font-weight:bold;line-height:10px;color:#f2f4fa">Поделиться</div>
<div class="a nw" style="left:436.2px;width:200px;text-align:center;top:551.5px;font-size:8.4px;font-weight:bold;line-height:10px;color:#f2f4fa">Инструменты организатора</div>
<div class="a nw" style="left:534.1px;width:200px;text-align:center;top:551.5px;font-size:8.4px;font-weight:bold;line-height:10px;color:#f2f4fa">Приложения</div>
<div class="a nw" style="left:604.0px;width:200px;text-align:center;top:551.5px;font-size:8.4px;font-weight:bold;line-height:10px;color:#f2f4fa">Примечания</div>
<div class="a nw" style="left:670.5px;width:200px;text-align:center;top:551.5px;font-size:8.4px;font-weight:bold;line-height:10px;color:#f2f4fa">Субтитры</div>
<div class="a nw" style="left:729.5px;width:200px;text-align:center;top:551.5px;font-size:8.4px;font-weight:bold;line-height:10px;color:#f2f4fa">Запись</div>
<div class="a nw" style="left:790.5px;width:200px;text-align:center;top:551.5px;font-size:8.4px;font-weight:bold;line-height:10px;color:#f2f4fa">Поддержка</div>
<div class="a nw" style="left:859.7px;width:200px;text-align:center;top:551.5px;font-size:8.4px;font-weight:bold;line-height:10px;color:#f2f4fa">Дополнительно</div>
<svg class="a" style="left:0;top:524px" width="1024" height="41" viewBox="0 524 1024 41" fill="none" stroke="#eef1f8" stroke-width="1.4" stroke-linecap="round" stroke-linejoin="round">
<!-- mic -->
<path d="M6.5 532.5a3 3 0 0 1 6 0v6a3 3 0 0 1 -6 0z"/>
<path d="M4 537.5a5.5 5.5 0 0 0 11 0 M9.5 543v4 M6.5 547.5h6"/>
<path d="M0.5 548.5L18 530.5" stroke="#d0306a" stroke-width="1.6"/>
<!-- carets -->
<g stroke-width="1.3"><path d="M30.5 540l2-2 2 2 M104 540l2-2 2 2 M245 540l2-2 2 2 M312.7 540l2-2 2 2 M387 540l2-2 2 2 M459.6 540l2-2 2 2 M656 540l2-2 2 2 M729.1 540l2-2 2 2"/></g>
<!-- video -->
<rect x="70" y="534.3" width="12" height="10" rx="2.5"/>
<path d="M82 537.5l5-3v10l-5-3z"/>
<!-- participants -->
<circle cx="203.6" cy="535.3" r="2.1"/><circle cx="211.2" cy="537.3" r="2.2"/>
<path d="M201 545.5v-2.5a2.3 2.3 0 0 1 2.3-2.3h2.5"/>
<rect x="205.8" y="541" width="9" height="5" rx="2.5"/>
<!-- chat -->
<path d="M285.5 533.5q1-2 3-2h6q3 0 3 3v4q0 2-2 2.5"/>
<path d="M281.8 537.5q0-3 3-3h6.5q3 0 3 3v4.5q0 3-3 3h-4l-2.5 2v-2q-3-.5-3-3z"/>
</svg>
<div class="a nw" style="left:219.8px;top:532.5px;font-size:9.2px;line-height:10px;color:#c8cde0">11</div>
<svg class="a" style="left:0;top:524px" width="1024" height="41" viewBox="0 524 1024 41" fill="none" stroke="#eef1f8" stroke-width="1.4" stroke-linecap="round" stroke-linejoin="round">
<circle cx="285.5" cy="540" r=".6" fill="#eef1f8" stroke-width=".9"/><circle cx="288" cy="540" r=".6" fill="#eef1f8" stroke-width=".9"/><circle cx="290.5" cy="540" r=".6" fill="#eef1f8" stroke-width=".9"/>
<!-- heart -->
<path d="M360.6 545.8l-6.8-6.6a3.9 3.9 0 0 1 6.8-4.8a3.9 3.9 0 0 1 6.8 4.8z"/>
<!-- share -->
<rect x="425.3" y="531.7" width="18.3" height="14.7" rx="1.5" fill="#23d68b" stroke="none"/>
<path d="M434.5 543v-7.5 M431.3 538.5l3.2-3.2 3.2 3.2" stroke="#0b2a1a" stroke-width="1.6"/>
<!-- shield -->
<path d="M536 532q3 1.5 6.5 1v6q0 5-6.5 7.5q-6.5-2.5-6.5-7.5v-6q3.5.5 6.5-1z"/>
<path d="M536 533.5v6.5h-5 M536 540v5.5 M536 540h5" stroke-width="1"/>
<path d="M536 533.2v6.8h5.5v-5.5q-3 .2-5.5-1.3z M536 540v5.5q-4-1.8-5-5.5z" fill="#eef1f8" stroke="none"/>
<!-- apps -->
<circle cx="638.5" cy="534.6" r="2.5"/><circle cx="629.6" cy="543.6" r="2.5"/>
<path d="M626.5 537.5v-2.5q0-2.5 2.5-2.5h2.5 M641.8 540.6v2.9q0 2.8-2.8 2.8h-2.5"/>
<!-- notes -->
<path d="M699 531.5h9.5q2.5 0 2.5 2.5v12.5h-10q-2.5 0-2.5-2.5v-10q0-2.5 0.5-2.5z"/>
<path d="M702 535h5 M702 537.5h5 M702 540h3" stroke-width="1.1"/>
<path d="M697 533.5h1.5 M697 536h1.5 M697 538.5h1.5 M697 541h1.5 M697 543.5h1.5" stroke-width="1"/>
<rect x="704" y="545" width="8.5" height="3" rx="1.5" fill="#eef1f8" stroke="none"/>
<!-- cc -->
<rect x="762.3" y="532.8" width="16.6" height="12.4" rx="2.5"/>
<!-- record -->
<circle cx="829.6" cy="539.3" r="8"/><circle cx="829.6" cy="539.3" r="3.2" fill="#eef1f8" stroke="none"/>
<!-- cast -->
<path d="M882 535.5v-1.5q0-1.8 1.8-1.8h13q1.8 0 1.8 1.8v9.7q0 1.8-1.8 1.8h-8"/>
<path d="M882 538.5a6.5 6.5 0 0 1 6.5 6.5 M882 541.2a3.8 3.8 0 0 1 3.8 3.8" stroke-width="1.2"/>
<circle cx="882.7" cy="544.3" r="1" fill="#eef1f8" stroke="none"/>
<!-- more -->
<circle cx="959.9" cy="539.3" r="8"/>
<circle cx="956.4" cy="539.3" r="1" fill="#eef1f8" stroke="none"/><circle cx="959.9" cy="539.3" r="1" fill="#eef1f8" stroke="none"/><circle cx="963.4" cy="539.3" r="1" fill="#eef1f8" stroke="none"/>
</svg>
<div class="a nw" style="left:762.3px;top:534.5px;width:16.6px;text-align:center;font-size:7.5px;font-weight:bold;line-height:9px;color:#eef1f8;letter-spacing:-.2px">CC</div>
</body></html>
